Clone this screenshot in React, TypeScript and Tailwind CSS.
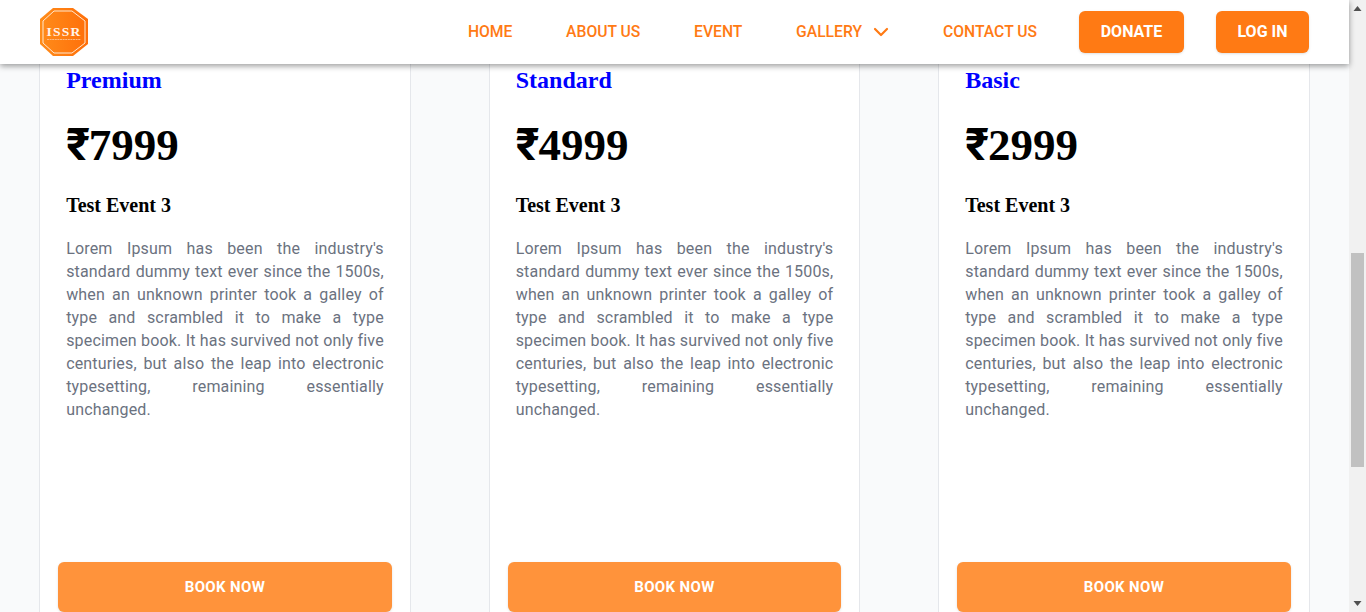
import { ChevronDown } from "lucide-react";

const plans = [
  { name: "Premium", price: "7999" },
  { name: "Standard", price: "4999" },
  { name: "Basic", price: "2999" },
];

function Logo() {
  return (
    <svg width="50" height="50" viewBox="0 0 50 50">
      <defs>
        <linearGradient id="lg" x1="0" y1="0" x2="1" y2="0">
          <stop offset="0" stopColor="#ff8c1a" />
          <stop offset="1" stopColor="#ff6f0a" />
        </linearGradient>
      </defs>
      <polygon points="14,1 34,1 49,12 49,37 34,49 14,49 1,37 1,12" fill="url(#lg)" />
      <polygon points="15,4 33,4 46,14 46,36 33,46 15,46 4,36 4,14" fill="none" stroke="#ffe8d0" strokeWidth="1" />
      <text x="25" y="29" textAnchor="middle" fontFamily="Liberation Serif" fontWeight="700" fontSize="13.5" letterSpacing="1.2" fill="#fff4ea">ISSR</text>
      <line x1="8" y1="32.5" x2="42" y2="32.5" stroke="#ffc79a" strokeWidth="0.8" strokeDasharray="2 0.6" />
    </svg>
  );
}

function Card({ name, price }: { name: string; price: string }) {
  return (
    <div className="w-[371.6px] bg-white border-x border-[#e5e7eb] px-[26px] flex flex-col shrink-0">
      <h3 className="text-[24px] leading-[32px] font-bold text-[#0000ff] font-['Liberation_Serif',serif]">{name}</h3>
      <div className="text-[45px] leading-[60px] mt-[19px] font-bold text-black font-['Liberation_Serif',serif]">
        <span className="font-['Roboto',sans-serif] mr-[-1px]">₹</span>{price}
      </div>
      <h4 className="text-[20px] leading-[28px] mt-[16px] font-bold text-black font-['Liberation_Serif',serif]">Test Event 3</h4>
      <p className="mt-[18px] text-[16px] leading-[23px] tracking-[0.16px] text-[#6b7280] text-justify font-['Roboto',sans-serif]">
        Lorem Ipsum has been the industry's standard dummy text ever since the 1500s, when an unknown printer took a galley of type and scrambled it to make a type specimen book. It has survived not only five centuries, but also the leap into electronic typesetting, remaining essentially unchanged.
      </p>
      <button className="mt-[141px] -mx-[8px] h-[50px] shrink-0 rounded-md bg-[#ff933b] text-white font-bold text-[15px] tracking-wide shadow-sm">BOOK NOW</button>
    </div>
  );
}

export default function App() {
  return (
    <div className="h-[612px] overflow-hidden bg-[#f9fafb] flex font-['Roboto',sans-serif]">
      <div className="w-[1349px] flex flex-col">
        <header className="h-[64px] bg-white shadow-[0_2px_6px_rgba(0,0,0,0.4)] relative z-10 flex items-center justify-between pl-[39px] pr-[40px] shrink-0">
          <Logo />
          <nav className="flex items-center text-[15.7px] font-medium text-[#ff7a14]">
            <a className="mr-[53.7px]">HOME</a>
            <a className="mr-[53.7px]">ABOUT US</a>
            <a className="mr-[53.7px]">EVENT</a>
            <a className="mr-[50px] flex items-center gap-[7px]">GALLERY <ChevronDown size={24} strokeWidth={2.2} /></a>
            <a className="mr-[42px]">CONTACT US</a>
            <button className="w-[105px] h-[42px] mr-[32px] bg-[#ff7a14] text-white rounded-md shadow font-bold text-[16px]">DONATE</button>
            <button className="w-[93px] h-[42px] bg-[#ff7a14] text-white rounded-md shadow font-bold text-[16px]">LOG IN</button>
          </nav>
        </header>
        <div className="flex justify-between px-[39.2px]">
          {plans.map((p) => (
            <Card key={p.name} {...p} />
          ))}
        </div>
      </div>
      <div className="w-[17px] h-[612px] bg-[#f1f1f1] flex flex-col items-center">
        <svg width="17" height="17" viewBox="0 0 17 17" className="shrink-0">
          <polygon points="8.5,6 12.5,11 4.5,11" fill="#505050" />
        </svg>
        <div className="h-[236px] shrink-0" />
        <div className="h-[214px] w-[13px] bg-[#c1c1c1] shrink-0" />
        <svg width="17" height="17" viewBox="0 0 17 17" className="shrink-0 mt-auto">
          <polygon points="4.5,6 12.5,6 8.5,11" fill="#505050" />
        </svg>
      </div>
    </div>
  );
}
